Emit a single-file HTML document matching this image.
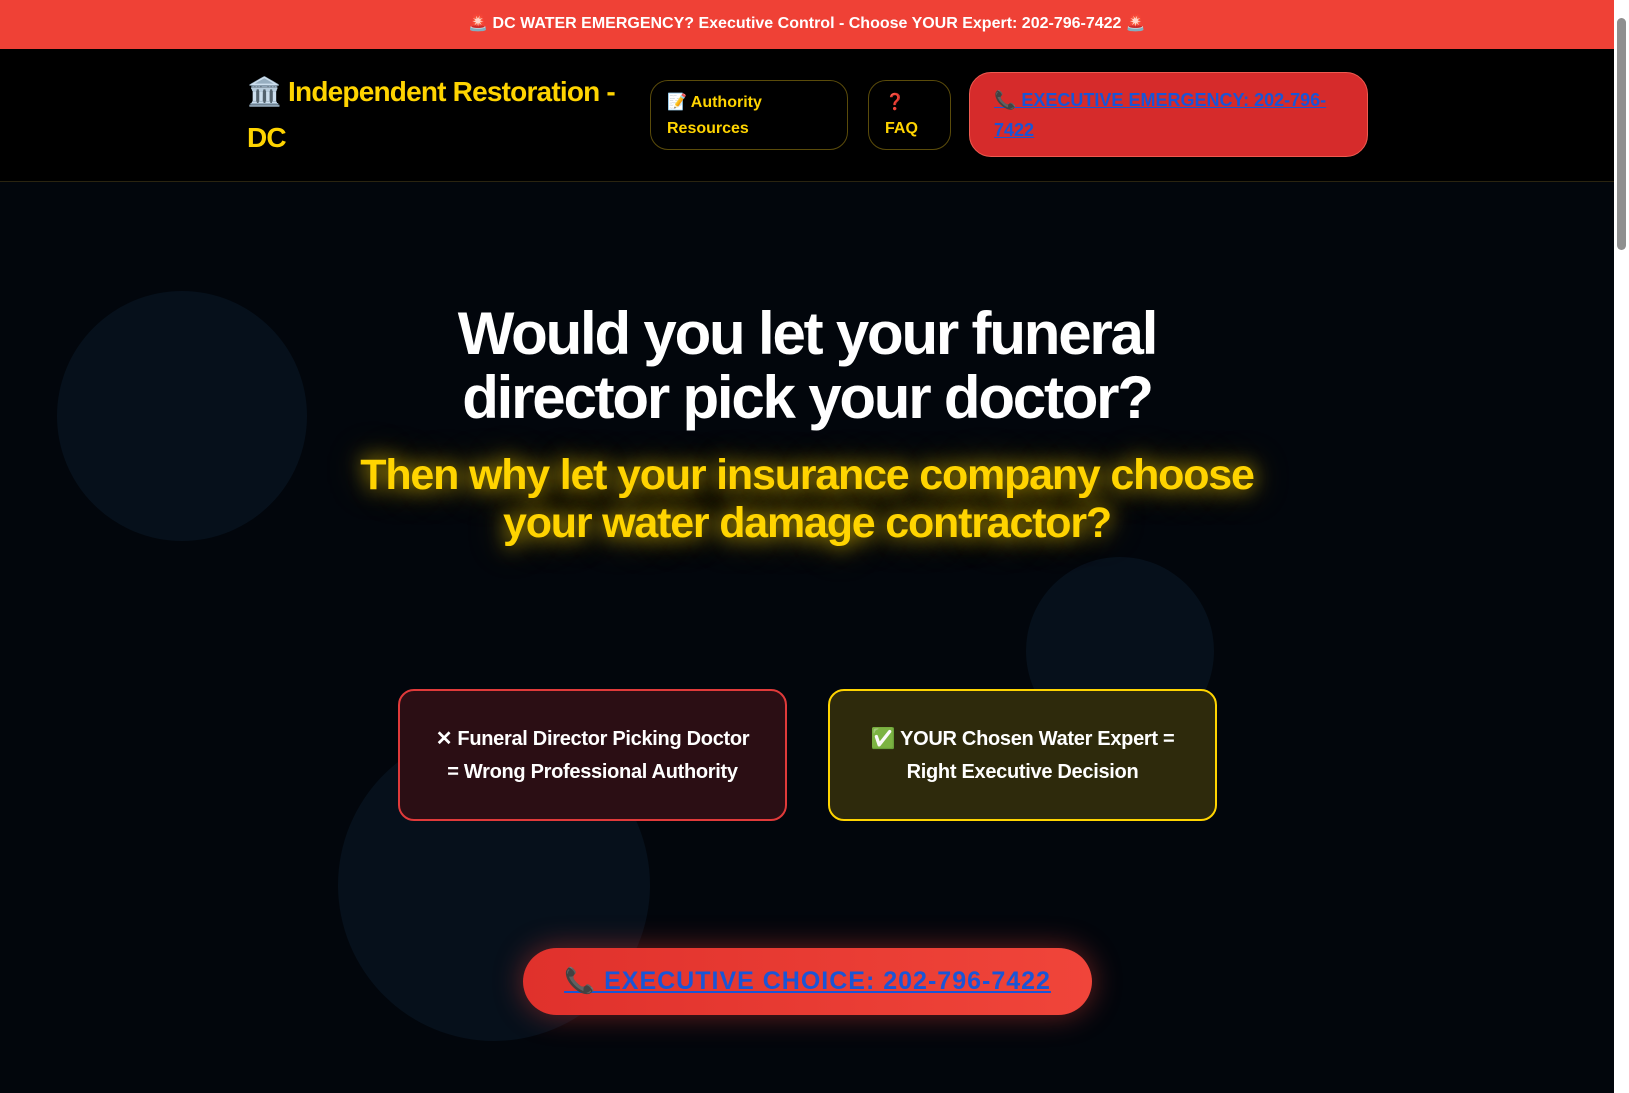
<!DOCTYPE html>
<html><head><meta charset="utf-8"><style>
*{box-sizing:border-box;margin:0;padding:0}
html,body{width:1629px;height:1093px;overflow:hidden;background:#02060c;font-family:"Liberation Sans","Noto Sans CJK SC",sans-serif}
.sb{position:absolute;right:0;top:0;width:15px;height:1093px;background:#fff}
.sb i{position:absolute;left:3px;top:18px;width:9px;height:232px;background:#8f8f8f;border-radius:5px}
.top{position:absolute;left:0;top:0;width:1614px;height:49px;background:#ef4136;color:#fff;font-weight:bold;font-size:16px;text-align:center;line-height:48px}
.hdr{position:absolute;left:0;top:49px;width:1614px;height:133px;background:#000;border-bottom:1px solid #2a2410}
.logo{position:absolute;left:247px;top:20px;width:400px;color:#ffd400;font-weight:bold;font-size:28px;line-height:46px;letter-spacing:-0.8px}
.nb{position:absolute;border:1px solid #5a4b0a;border-radius:18px;color:#ffd400;font-weight:bold;font-size:16px;line-height:26px;padding:9px 16px}
.em{position:absolute;left:969px;top:23px;width:399px;height:85px;background:#d62b2b;border:1px solid #ef5a50;border-radius:22px;padding:12px 24px;font-weight:bold;font-size:18px;line-height:30px;color:#1a55d6;text-decoration:underline}
.c{position:absolute;border-radius:50%;background:#06101b}
h1{position:absolute;left:0;width:1614px;top:302px;text-align:center;color:#fff;font-size:60px;line-height:64px;letter-spacing:-2.2px;font-weight:bold}
h2{position:absolute;left:0;width:1614px;top:451px;text-align:center;color:#ffd400;font-size:43px;line-height:48px;letter-spacing:-1.2px;font-weight:bold;text-shadow:0 0 20px rgba(255,212,0,.8),0 0 40px rgba(255,212,0,.4)}
.bx{position:absolute;top:689px;width:389px;height:132px;border-radius:16px;color:#fff;font-size:20px;line-height:33px;text-align:center;padding-top:32px;font-weight:bold;letter-spacing:-0.3px}
.r{left:398px;background:#2b0e14;border:2px solid #e03a3a}
.y{left:828px;background:#2e2a0c;border:2px solid #ffd400}
.cta{position:absolute;left:523px;top:948px;width:569px;height:67px;border-radius:34px;background:linear-gradient(90deg,#e0312c,#f0453a);box-shadow:0 0 30px rgba(239,65,54,.45);text-align:center;line-height:67px;font-weight:bold;font-size:25px;color:#1a55d6;text-decoration:underline;letter-spacing:1px}
</style></head><body>
<div class="top">🚨 DC WATER EMERGENCY? Executive Control - Choose YOUR Expert: 202-796-7422 🚨</div>
<div class="hdr">
<div class="logo">🏛️ Independent Restoration - DC</div>
<div class="nb" style="left:650px;top:31px;width:198px;height:70px">📝 Authority Resources</div>
<div class="nb" style="left:868px;top:31px;width:83px;height:70px">❓<br>FAQ</div>
<div class="em">📞 EXECUTIVE EMERGENCY: 202-796-7422</div>
</div>
<div class="c" style="left:57px;top:291px;width:250px;height:250px"></div>
<div class="c" style="left:1026px;top:557px;width:188px;height:188px"></div>
<div class="c" style="left:338px;top:729px;width:312px;height:312px"></div>
<h1>Would you let your funeral<br>director pick your doctor?</h1>
<h2>Then why let your insurance company choose<br>your water damage contractor?</h2>
<div class="bx r">✕ Funeral Director Picking Doctor<br>= Wrong Professional Authority</div>
<div class="bx y">✅ YOUR Chosen Water Expert =<br>Right Executive Decision</div>
<div class="cta">📞 EXECUTIVE CHOICE: 202-796-7422</div>
<div class="sb"><i></i></div>
</body></html>
